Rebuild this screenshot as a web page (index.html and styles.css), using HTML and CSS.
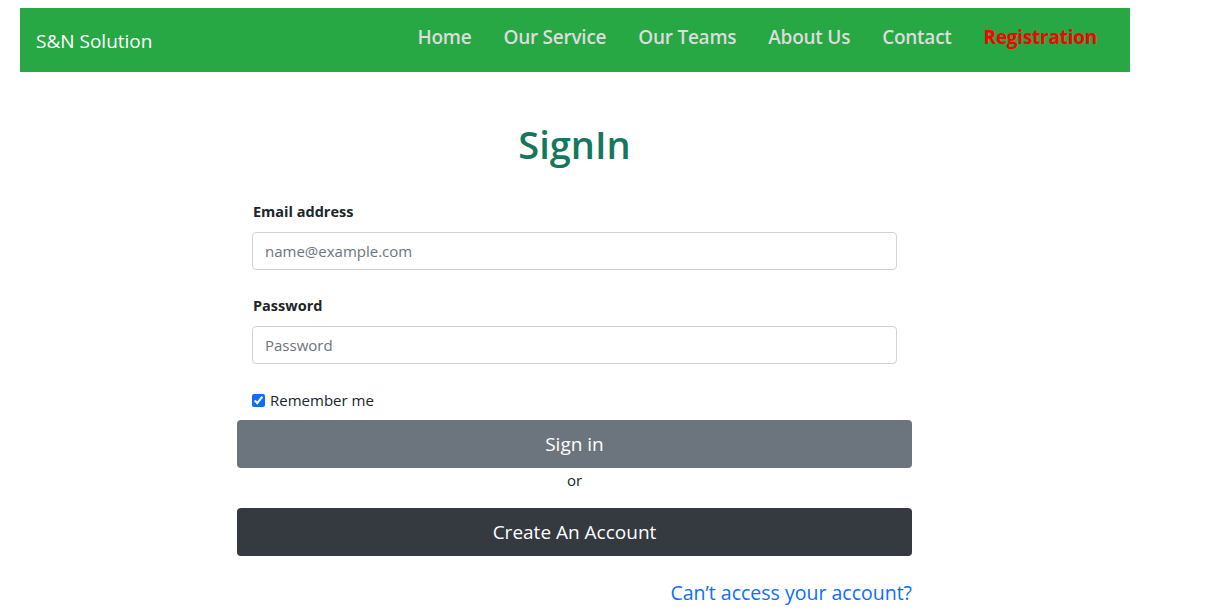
FILE: index.html
```html
<!DOCTYPE html>
<html lang="en">
<head>
<meta charset="utf-8">
<title>SignIn</title>
<link rel="stylesheet" href="styles.css">
</head>
<body>
<div class="wrap">
  <nav class="navbar">
    <a class="brand" href="#">S&amp;N Solution</a>
    <ul class="nav-links">
      <li><a href="#">Home</a></li>
      <li><a href="#">Our Service</a></li>
      <li><a href="#">Our Teams</a></li>
      <li><a href="#">About Us</a></li>
      <li><a href="#">Contact</a></li>
      <li><a href="#" class="reg">Registration</a></li>
    </ul>
  </nav>
  <main class="page">
    <h1 class="title">SignIn</h1>
    <form class="form">
      <div class="fields">
        <div class="field">
          <label class="label" for="email">Email address</label>
          <input class="input" id="email" type="email" placeholder="name@example.com">
        </div>
        <div class="field">
          <label class="label" for="pw">Password</label>
          <input class="input" id="pw" type="password" placeholder="Password">
        </div>
        <label class="check"><input type="checkbox" checked> Remember me</label>
      </div>
      <button type="button" class="btn btn-gray">Sign in</button>
      <p class="or">or</p>
      <button type="button" class="btn btn-dark">Create An Account</button>
      <div class="help"><a href="#">Can’t access your account?</a></div>
    </form>
  </main>
</div>
</body>
</html>
```

FILE: styles.css
```css
* { box-sizing: border-box; }
body {
  margin: 8px;
  font-family: "Open Sans", "Noto Sans", sans-serif;
  font-size: 16px;
  line-height: 1.5;
  color: #212529;
  background: #fff;
}
a { text-decoration: none; }
.wrap {
  width: 1110px;
  margin-left: 12px;
}
.navbar {
  height: 64px;
  background: #28a745;
  display: flex;
  align-items: center;
  padding: 0 17px 0 16px;
}
.brand {
  color: #fff;
  font-size: 19px;
  line-height: 30px;
  margin-top: 2px;
}
.nav-links {
  list-style: none;
  margin: 0 0 6px auto;
  padding: 0;
  display: flex;
}
.nav-links a {
  display: block;
  padding: 0 16px;
  color: #dcdcdc;
  font-size: 19px;
  font-weight: 600;
  line-height: 30px;
  letter-spacing: -0.25px;
}
.nav-links a.reg { color: #ff0000; font-weight: 700; }
.page {
  width: 675px;
  margin-left: 217px;
}
.title {
  margin: 48px 0 32px;
  text-align: center;
  font-size: 38px;
  line-height: 48px;
  font-weight: 600;
  color: #16775f;
}
.form { display: flex; flex-direction: column; }
.fields { padding: 0 15px; display: flex; flex-direction: column; gap: 24px; }
.field { display: flex; flex-direction: column; }
.label {
  font-weight: 700;
  font-size: 14.5px;
  line-height: 24px;
  margin-bottom: 8px;
  padding-left: 1px;
}
.input {
  height: 38px;
  border: 1px solid #ced4da;
  border-radius: 4px;
  padding: 6px 12px;
  font-family: inherit;
  font-size: 15px;
  color: #212529;
}
.input::placeholder { color: #6c757d; }
.check {
  display: flex;
  align-items: center;
  gap: 5px;
  font-size: 15px;
  line-height: 24px;
  margin-bottom: 8px;
}
.check input {
  margin: 0;
  width: 13px;
  height: 13px;
  accent-color: #0d6efd;
}
.btn {
  height: 48px;
  border: 0;
  border-radius: 4px;
  color: #fff;
  font-family: inherit;
  font-size: 19px;
}
.btn-gray { background: #6c757d; }
.btn-dark { background: #343a40; }
.or {
  margin: 0 0 16px;
  text-align: center;
  font-size: 15px;
  line-height: 24px;
}
.help {
  text-align: right;
  margin-top: 22px;
}
.help a {
  color: #0d6efd;
  font-size: 19.5px;
  line-height: 30px;
}
```
